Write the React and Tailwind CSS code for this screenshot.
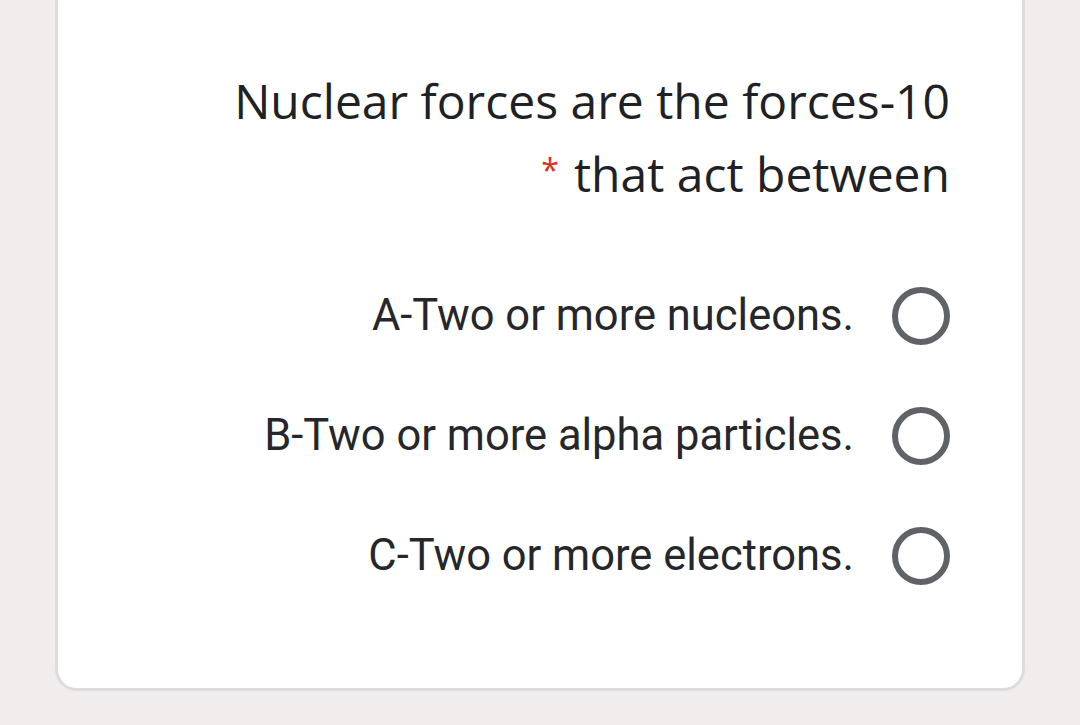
export default function App() {
  const options = [
    "A-Two or more nucleons.",
    "B-Two or more alpha particles.",
    "C-Two or more electrons.",
  ];
  return (
    <div className="w-[1080px] h-[725px] bg-[#f0edec] overflow-hidden">
      <div className="ml-[55px] mt-[-20px] w-[970px] h-[711px] bg-white border-[3px] border-[#dcdcdf] rounded-[22px] pr-[72px]">
        <div className="pt-[81px] flex flex-col items-end text-[#202124] text-[48px] leading-[73px]" style={{ fontFamily: '"Open Sans", sans-serif' }}>
          <div>Nuclear forces are the forces-10</div>
          <div className="flex items-start">
            <span className="text-[#d93025] text-[32px] leading-none mt-[17px] mr-[15px]">*</span>
            <span>that act between</span>
          </div>
        </div>
        <div className="mt-[76px] flex flex-col gap-[60px] items-end" style={{ fontFamily: 'Roboto, sans-serif' }}>
          {options.map((o) => (
            <div key={o} className="flex items-center h-[60px]">
              <span className="text-[43.5px] text-[#26272a] mr-[38px]">{o}</span>
              <span className="w-[58px] h-[58px] rounded-full border-[6px] border-[#5f6368]"></span>
            </div>
          ))}
        </div>
      </div>
    </div>
  );
}
